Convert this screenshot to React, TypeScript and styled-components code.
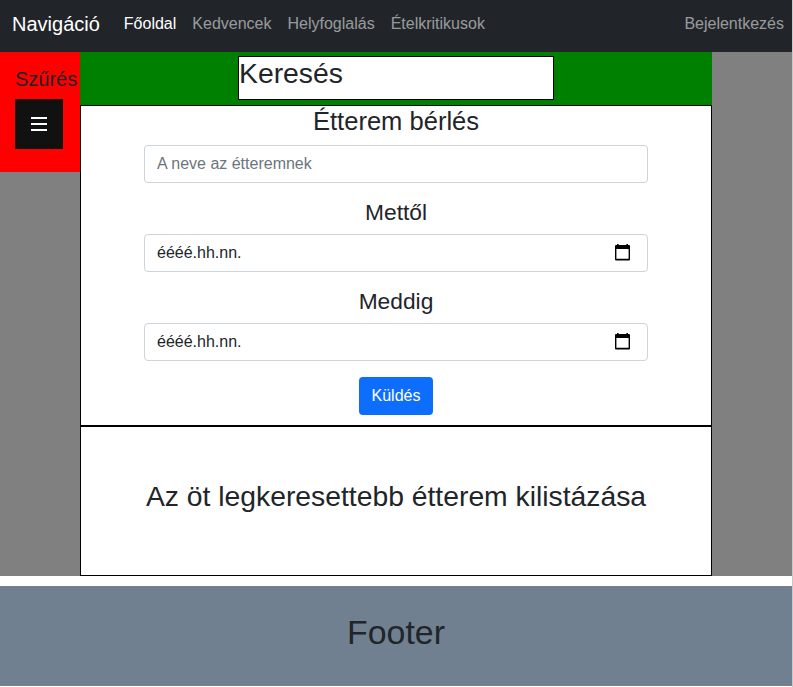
import React from "react";
import styled, { createGlobalStyle } from "styled-components";

const GlobalStyle = createGlobalStyle`
  *, *::before, *::after { box-sizing: border-box; }
  body {
    margin: 0;
    background: #fff;
    color: #212529;
    font: 400 16px/1.5 "Liberation Sans", Arial, sans-serif;
    overflow: hidden;
  }
`;

const Page = styled.div`
  width: 793px;
  height: 687px;
  border-right: 1px solid #c8c8c8;
`;

const Navbar = styled.nav`
  display: flex;
  align-items: center;
  height: 52px;
  padding: 0 8px 4px 12px;
  background: #212529;
`;

const Brand = styled.a`
  margin-right: 16px;
  color: #fff;
  font-size: 20px;
  line-height: 30px;
`;

const NavLink = styled.a<{ $active?: boolean; $end?: boolean }>`
  padding: 0 8px;
  margin-left: ${({ $end }) => ($end ? "auto" : "0")};
  color: ${({ $active }) => ($active ? "#fff" : "rgba(255, 255, 255, 0.55)")};
  white-space: nowrap;
  ${({ $end }) => $end && "padding-right: 0;"}
`;

const Main = styled.main`
  display: grid;
  grid-template-columns: 80px 632px 80px;
  height: 524px;
  background: #808080;
`;

const Sidebar = styled.aside`
  height: 120px;
  padding: 15px 0 0 15px;
  background: #f00;
`;

const Heading = styled.h2<{ $size: number; $gap?: number }>`
  margin: 0 0 ${({ $gap = 8 }) => $gap}px;
  font-size: ${({ $size }) => $size}px;
  font-weight: 400;
  line-height: 1.2;
  white-space: nowrap;
`;

const MenuButton = styled.button`
  display: flex;
  align-items: center;
  justify-content: center;
  width: 48px;
  height: 50px;
  padding: 0;
  border: 0;
  background: #111;
  color: #fff;
`;

const Content = styled.div`
  display: flex;
  flex-direction: column;
`;

const SearchBar = styled.header`
  height: 53px;
  padding-top: 4px;
  background: #008000;
`;

const SearchBox = styled.div`
  width: 316px;
  height: 44px;
  margin: 0 auto;
  border: 1px solid #000;
  background: #fff;
`;

const RentalForm = styled.form`
  display: flex;
  flex-direction: column;
  align-items: center;
  height: 321px;
  border: 1px solid #000;
  background: #fff;
`;

const fieldBox = `
  width: 504px;
  height: 38px;
  flex: none;
  margin: 0 0 16px;
  padding: 0 12px;
  border: 1px solid #ced4da;
  border-radius: 4px;
  background: #fff;
`;

const TextField = styled.input`
  ${fieldBox}
  font: inherit;
  &::placeholder { color: #6c757d; opacity: 1; }
`;

const DateField = styled.div`
  ${fieldBox}
  display: flex;
  align-items: center;
  justify-content: space-between;
  padding-right: 16px;
`;

const Submit = styled.button`
  width: 74px;
  height: 38px;
  padding: 0;
  border: 0;
  border-radius: 4px;
  background: #0d6efd;
  color: #fff;
  font: inherit;
`;

const TopList = styled.section`
  display: flex;
  align-items: center;
  justify-content: center;
  height: 150px;
  border: 1px solid #000;
  background: #fff;
`;

const Footer = styled.footer`
  display: flex;
  justify-content: center;
  height: 100px;
  margin-top: 10px;
  padding-top: 26px;
  background: #708090;
`;

const CalendarIcon = () => (
  <svg width="17" height="18" viewBox="0 0 17 18" aria-hidden="true">
    <path
      fill="#000"
      fillRule="evenodd"
      d="M3 0h1.6v1h7.8v-1h1.6v1h1q1 0 1 1v13.4q0 1-1 1h-13q-1 0-1-1v-13.4q0-1 1-1h1zM2.4 5v9.8h12.2v-9.8z"
    />
  </svg>
);

const MenuIcon = () => (
  <svg width="16" height="16" viewBox="0 0 16 16" aria-hidden="true">
    <path stroke="#fff" strokeWidth="2" d="M0 2h16M0 8h16M0 14h16" />
  </svg>
);

const links = ["Főoldal", "Kedvencek", "Helyfoglalás", "Ételkritikusok"];
const dates = ["Mettől", "Meddig"];

export default function App() {
  return (
    <>
      <GlobalStyle />
      <Page>
        <Navbar>
          <Brand>Navigáció</Brand>
          {links.map((label, i) => (
            <NavLink key={label} $active={i === 0}>{label}</NavLink>
          ))}
          <NavLink $end>Bejelentkezés</NavLink>
        </Navbar>
        <Main>
          <Sidebar>
            <Heading as="h5" $size={20}>Szűrés</Heading>
            <MenuButton type="button" aria-label="Szűrés">
              <MenuIcon />
            </MenuButton>
          </Sidebar>
          <Content>
            <SearchBar>
              <SearchBox>
                <Heading $size={28.33}>Keresés</Heading>
              </SearchBox>
            </SearchBar>
            <RentalForm>
              <Heading as="h3" $size={25.55}>Étterem bérlés</Heading>
              <TextField type="text" placeholder="A neve az étteremnek" />
              {dates.map((label) => (
                <React.Fragment key={label}>
                  <Heading as="h4" $size={22.78}>{label}</Heading>
                  <DateField>
                    <span>éééé.hh.nn.</span>
                    <CalendarIcon />
                  </DateField>
                </React.Fragment>
              ))}
              <Submit type="button">Küldés</Submit>
            </RentalForm>
            <TopList>
              <Heading $size={28.3}>Az öt legkeresettebb étterem kilistázása</Heading>
            </TopList>
          </Content>
        </Main>
        <Footer>
          <Heading as="h1" $size={33.88}>Footer</Heading>
        </Footer>
      </Page>
    </>
  );
}
